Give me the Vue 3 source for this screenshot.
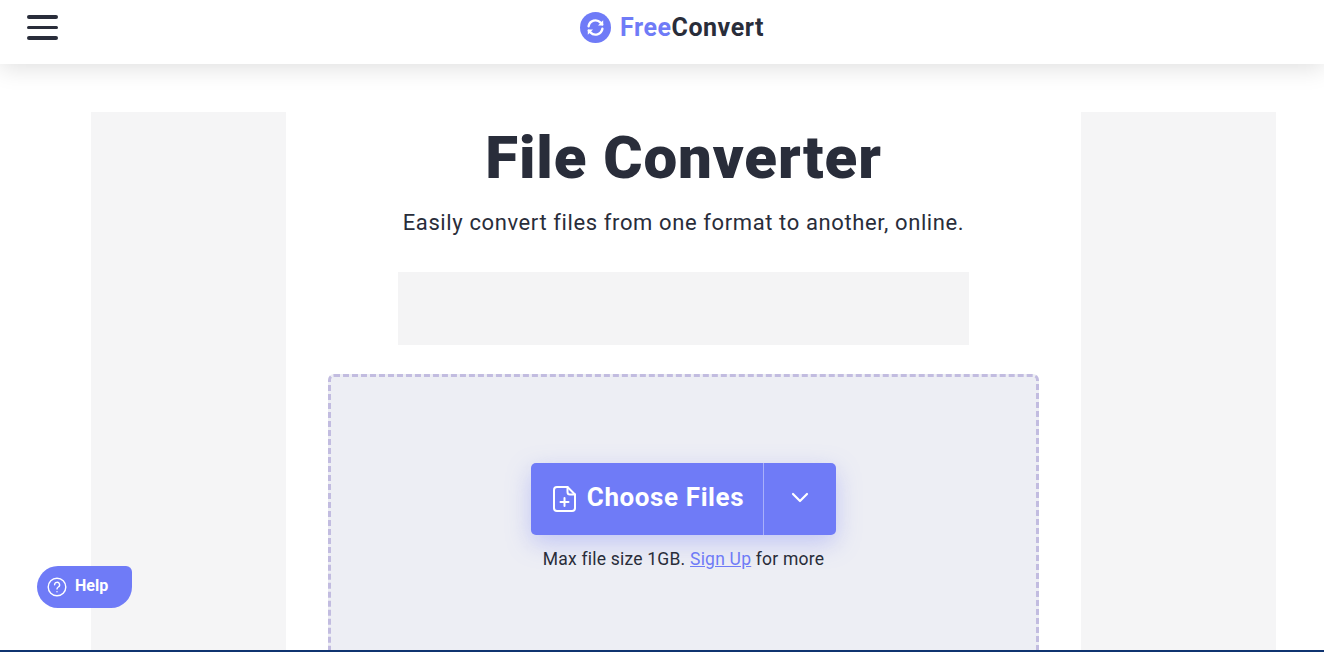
<script setup>
const lines = [0, 1, 2]
</script>

<template>
  <div class="page">
    <header class="topbar">
      <button class="menu" aria-label="Menu">
        <span v-for="l in lines" :key="l" class="menu-line"></span>
      </button>
      <div class="logo">
        <svg class="logo-icon" width="31" height="31" viewBox="0 0 31 31">
          <circle cx="15.5" cy="15.5" r="15.5" fill="#6f7bf7" />
          <path d="M8.6 14.2a7 7 0 0 1 12-3.6l1.6 1.7" fill="none" stroke="#fff" stroke-width="2.4" stroke-linecap="round" />
          <path d="M23.2 8.2v5.2h-5.2z" fill="#fff" />
          <path d="M22.4 16.8a7 7 0 0 1-12 3.6l-1.6-1.7" fill="none" stroke="#fff" stroke-width="2.4" stroke-linecap="round" />
          <path d="M7.8 22.8v-5.2H13z" fill="#fff" />
        </svg>
        <span class="logo-text"><span class="free">Free</span>Convert</span>
      </div>
    </header>

    <div class="columns">
      <aside class="ad-side"></aside>
      <main class="center">
        <h1>File Converter</h1>
        <p class="sub">Easily convert files from one format to another, online.</p>
        <div class="ad-top"></div>
        <section class="dropzone">
          <div class="choose">
            <button class="choose-main">
              <svg width="26" height="28" viewBox="0 0 26 28" fill="none" stroke="#fff" stroke-width="2" stroke-linejoin="round" stroke-linecap="round">
                <path d="M5 2h10.5L23 9.5V23a3 3 0 0 1-3 3H5a3 3 0 0 1-3-3V5a3 3 0 0 1 3-3z" />
                <path d="M15.5 2v5a2.5 2.5 0 0 0 2.5 2.5h5" />
                <path d="M12.5 13v8M8.5 17h8" />
              </svg>
              <span class="choose-label">Choose Files</span>
            </button>
            <button class="choose-more" aria-label="More sources">
              <svg width="18" height="11" viewBox="0 0 18 11" fill="none" stroke="#fff" stroke-width="2.2" stroke-linecap="round" stroke-linejoin="round">
                <path d="M2 2l7 7 7-7" />
              </svg>
            </button>
          </div>
          <p class="limit">Max file size 1GB. <a href="#">Sign Up</a> for more</p>
        </section>
      </main>
      <aside class="ad-side"></aside>
    </div>

    <button class="help">
      <svg width="20" height="20" viewBox="0 0 20 20" fill="none" stroke="#fff" stroke-width="1.4" stroke-linecap="round">
        <circle cx="10" cy="10" r="8.8" />
        <path d="M7.6 7.8a2.5 2.5 0 1 1 3.7 2.2c-.8.5-1.3 1-1.3 1.9" />
        <path d="M10 14.6v.1" />
      </svg>
      <span>Help</span>
    </button>
    <div class="bottom-line"></div>
  </div>
</template>

<style>
html, body {
  margin: 0;
  overflow: hidden;
  background: #fff;
}
</style>

<style scoped>
.page {
  position: relative;
  width: 1324px;
  height: 652px;
  overflow: hidden;
  font-family: Roboto, "Liberation Sans", sans-serif;
  color: #292d3a;
}
.topbar {
  position: relative;
  z-index: 2;
  display: flex;
  align-items: center;
  justify-content: center;
  height: 64px;
  background: #fff;
  box-shadow: 0 4px 24px rgba(0, 0, 0, 0.13);
}
.menu {
  position: absolute;
  top: 15px;
  left: 27px;
  display: flex;
  flex-direction: column;
  gap: 7px;
  padding: 0;
  border: 0;
  background: none;
}
.menu-line {
  display: block;
  width: 31px;
  height: 3.5px;
  border-radius: 2px;
  background: #292d3a;
}
.logo {
  display: flex;
  align-items: center;
  gap: 9px;
  margin-left: 20px;
  margin-bottom: 9px;
}
.logo-text {
  font-size: 25px;
  font-weight: 700;
  letter-spacing: 0.55px;
}
.free {
  color: #6f7bf7;
}
.columns {
  display: grid;
  grid-template-columns: 195px 795px 195px;
  padding: 48px 48px 0 91px;
}
.ad-side {
  height: 600px;
  background: #f5f5f6;
}
.center {
  display: flex;
  flex-direction: column;
  align-items: center;
}
h1 {
  margin: 13px 0 0;
  font-size: 60px;
  line-height: 66px;
  font-weight: 900;
  letter-spacing: 0.9px;
}
.sub {
  margin: 16px 0 0;
  font-size: 22px;
  line-height: 32px;
  letter-spacing: 0.61px;
}
.ad-top {
  width: 571px;
  height: 73px;
  margin-top: 33px;
  background: #f4f4f5;
}
.dropzone {
  box-sizing: border-box;
  display: flex;
  flex-direction: column;
  align-items: center;
  width: 711px;
  height: 400px;
  margin-top: 29px;
  padding-top: 86px;
  border: 3px dashed #c2bce0;
  border-radius: 6px;
  background: #edeef4;
}
.choose {
  display: flex;
  height: 72px;
  border-radius: 5px;
  background: #6f7bf7;
  box-shadow: 0 8px 24px rgba(111, 123, 247, 0.35);
}
.choose button {
  display: flex;
  align-items: center;
  justify-content: center;
  border: 0;
  padding: 0;
  background: none;
  color: #fff;
  font-family: inherit;
}
.choose-main {
  gap: 9px;
  width: 232px;
  padding-left: 2px !important;
  font-size: 26px;
  font-weight: 700;
  letter-spacing: 0.6px;
}
.choose-label {
  margin-bottom: 4px;
}
.choose-more {
  width: 73px;
  padding-bottom: 3px !important;
  border-left: 1px solid #a9b0fa !important;
}
.limit {
  margin: 12px 0 0;
  font-size: 17.5px;
  line-height: 24px;
  letter-spacing: 0.22px;
}
.limit a {
  color: #6f7bf7;
}
.help {
  position: absolute;
  left: 37px;
  top: 566px;
  display: flex;
  align-items: center;
  gap: 8px;
  box-sizing: border-box;
  width: 95px;
  height: 42px;
  padding: 0 0 0 10px;
  border: 0;
  border-radius: 21px 6px 21px 21px;
  background: #6f7bf7;
  color: #fff;
  font-family: inherit;
  font-size: 16px;
  font-weight: 700;
}
.help span {
  margin-bottom: 4px;
}
.bottom-line {
  position: absolute;
  left: 0;
  right: 0;
  bottom: 0;
  height: 2px;
  background: #0f3470;
}
</style>
